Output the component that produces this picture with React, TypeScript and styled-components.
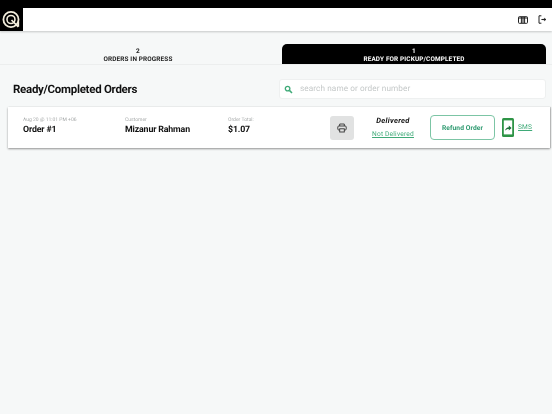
import React from "react";
import styled, { createGlobalStyle } from "styled-components";

const Global = createGlobalStyle`
  html, body { margin: 0; padding: 0; background: #f6f8f8; }
  body { font-family: "Roboto", "Liberation Sans", sans-serif; color: #111; text-rendering: geometricPrecision; }
`;
const Page = styled.div`
  width: 552px;
  height: 414px;
  overflow: hidden;
  background: #f6f8f8;
  display: flex;
  flex-direction: column;
  filter: blur(0.3px);
`;
const TopStrip = styled.div`
  height: 8px;
  background: #000;
  flex: none;
`;
const Header = styled.header`
  height: 23px;
  flex: none;
  background: #fff;
  display: flex;
  align-items: center;
  justify-content: space-between;
  box-shadow: 0 1px 2px rgba(0, 0, 0, 0.2);
  position: relative;
`;
const LogoBox = styled.div`
  width: 23px;
  height: 23px;
  background: #000;
  display: flex;
  align-items: center;
  justify-content: center;
`;
const HeaderIcons = styled.div`
  display: flex;
  align-items: center;
  gap: 10px;
  padding-right: 5px;
`;
const Tabs = styled.div`
  height: 34px;
  flex: none;
  display: flex;
  align-items: flex-end;
  justify-content: space-between;
  padding-right: 6px;
  border-bottom: 1px solid #eceeee;
  box-sizing: border-box;
`;
const Tab = styled.div<{ $active?: boolean }>`
  width: ${(p) => (p.$active ? 264 : 276)}px;
  height: 20px;
  background: ${(p) => (p.$active ? "#000" : "transparent")};
  color: ${(p) => (p.$active ? "#fff" : "#222")};
  border-radius: 5px 5px 0 0;
  display: flex;
  flex-direction: column;
  align-items: center;
  justify-content: center;
  padding-top: 1px;
  box-sizing: border-box;
  font-size: 6.4px;
  line-height: 8px;
  font-weight: 700;
  letter-spacing: 0.15px;
  text-transform: uppercase;
`;
const TitleRow = styled.div`
  display: flex;
  align-items: center;
  justify-content: space-between;
  padding: 14px 6px 8px 13px;
`;
const Title = styled.h1`
  margin: 0;
  font-size: 11.5px;
  line-height: 20px;
  font-weight: 700;
  letter-spacing: -0.28px;
`;
const SearchBox = styled.div`
  width: 267px;
  height: 20px;
  box-sizing: border-box;
  background: #fff;
  border: 1px solid #eef0f0;
  border-radius: 3px;
  display: flex;
  align-items: center;
  gap: 7px;
  padding-left: 4px;
  font-size: 8.2px;
  letter-spacing: 0.1px;
  color: #c4c8c8;
`;
const Card = styled.section`
  margin: 0 2px 0 8px;
  height: 41px;
  background: #fff;
  box-shadow: 0 1px 2px rgba(0, 0, 0, 0.4), 1px 0 1px rgba(0, 0, 0, 0.15);
  display: flex;
  align-items: center;
`;
const Info = styled.div<{ $w: number }>`
  width: ${(p) => p.$w}px;
  flex: none;
  display: flex;
  flex-direction: column;
  gap: 1px;
  margin-top: -2px;
`;
const Info1 = styled(Info)`
  margin-left: 15px;
`;
const Small = styled.div`
  font-size: 5px;
  line-height: 7px;
  color: #a8abab;
`;
const Value = styled.div`
  font-size: 8.8px;
  line-height: 11px;
  font-weight: 700;
  color: #111;
  letter-spacing: -0.15px;
`;
const PrintBtn = styled.div`
  width: 24px;
  height: 24px;
  background: #e1e2e2;
  border-radius: 3px;
  display: flex;
  align-items: center;
  justify-content: center;
  flex: none;
`;
const Status = styled.div`
  width: 70px;
  flex: none;
  display: flex;
  flex-direction: column;
  align-items: center;
  gap: 5px;
  margin-left: 4px;
  margin-top: -1px;
`;
const Delivered = styled.div`
  font-size: 7.5px;
  line-height: 9px;
  font-weight: 700;
  font-style: italic;
  letter-spacing: 0.3px;
`;
const LinkText = styled.span`
  font-size: 6.6px;
  line-height: 9px;
  color: #3faa78;
  text-decoration: underline;
  letter-spacing: 0.2px;
`;
const RefundBtn = styled.div`
  width: 65px;
  height: 25px;
  box-sizing: border-box;
  margin-left: 2px;
  border: 1px solid #7cc5a5;
  border-radius: 4px;
  display: flex;
  align-items: center;
  justify-content: center;
  font-size: 6.7px;
  font-weight: 700;
  color: #2e9a70;
  letter-spacing: 0.1px;
  flex: none;
`;
const SmsGroup = styled.div`
  display: flex;
  align-items: center;
  gap: 4px;
  margin-left: 7px;
`;

const Logo = () => (
  <svg width="21" height="21" viewBox="0 0 20 20" fill="none" stroke="#f3eedd">
    <circle cx="9.5" cy="10" r="7.2" strokeWidth="1.7" />
    <circle cx="9.5" cy="10" r="3.8" strokeWidth="1.5" />
    <path d="M10 10.5 L16.5 17 M16.5 12 V17" strokeWidth="1.6" />
  </svg>
);
const ColumnsIcon = () => (
  <svg width="10" height="8" viewBox="0 0 10 8" fill="none" stroke="#222" strokeWidth="1">
    <rect x="0.5" y="0.7" width="9" height="6.6" rx="0.8" />
    <path d="M3.4 1 V7 M5 1 V7 M6.6 1 V7 M0.5 2 H9.5" />
  </svg>
);
const LogoutIcon = () => (
  <svg width="9" height="9" viewBox="0 0 9 9" fill="none" stroke="#222">
    <path d="M3.4 0.8 H1 V8.2 H3.4" strokeWidth="1" />
    <path d="M3.4 4.5 H7.6" strokeWidth="1.1" />
    <path d="M6.3 3.1 L8 4.5 L6.3 5.9 Z" fill="#222" strokeWidth="0.4" />
  </svg>
);
const SearchIcon = () => (
  <svg width="9" height="9" viewBox="0 0 9 9" fill="none" stroke="#3faa78">
    <circle cx="3.6" cy="3.6" r="2.3" strokeWidth="1.3" />
    <path d="M5.4 5.4 L8 8" strokeWidth="1.5" />
  </svg>
);
const PrinterIcon = () => (
  <svg width="10" height="10" viewBox="0 0 10 10" fill="none" stroke="#333" strokeWidth="0.9">
    <path d="M2.7 3 V1 H7.3 V3" />
    <rect x="0.8" y="3" width="8.4" height="4" rx="1" />
    <rect x="2.7" y="5.8" width="4.6" height="3.2" fill="#e1e2e2" />
  </svg>
);
const PhoneIcon = () => (
  <svg width="12" height="19" viewBox="0 0 12 19">
    <rect x="0" y="0" width="12" height="19" rx="1.5" fill="#2e9446" />
    <rect x="1.8" y="2.4" width="8.4" height="14" fill="#fff" />
    <path d="M3 12.8 C3.4 10.4 5 9.4 6.8 9.2 V7.6 L9.6 10 L6.8 12.4 V11 C5.2 11 4 11.6 3 12.8 Z" fill="#1e6f38" />
  </svg>
);

export default function App() {
  return (
    <Page>
      <Global />
      <TopStrip />
      <Header>
        <LogoBox>
          <Logo />
        </LogoBox>
        <HeaderIcons>
          <ColumnsIcon />
          <LogoutIcon />
        </HeaderIcons>
      </Header>
      <Tabs>
        <Tab>
          <span>2</span>
          <span>Orders in progress</span>
        </Tab>
        <Tab $active>
          <span>1</span>
          <span>Ready for pickup/completed</span>
        </Tab>
      </Tabs>
      <TitleRow>
        <Title>Ready/Completed Orders</Title>
        <SearchBox>
          <SearchIcon />
          search name or order number
        </SearchBox>
      </TitleRow>
      <Card>
        <Info1 $w={102}>
          <Small>Aug 20 @ 11:01 PM +06</Small>
          <Value>Order #1</Value>
        </Info1>
        <Info $w={103}>
          <Small>Customer</Small>
          <Value>Mizanur Rahman</Value>
        </Info>
        <Info $w={102}>
          <Small>Order Total:</Small>
          <Value>$1.07</Value>
        </Info>
        <PrintBtn>
          <PrinterIcon />
        </PrintBtn>
        <Status>
          <Delivered>Delivered</Delivered>
          <LinkText>Not Delivered</LinkText>
        </Status>
        <RefundBtn>Refund Order</RefundBtn>
        <SmsGroup>
          <PhoneIcon />
          <LinkText>SMS</LinkText>
        </SmsGroup>
      </Card>
    </Page>
  );
}
